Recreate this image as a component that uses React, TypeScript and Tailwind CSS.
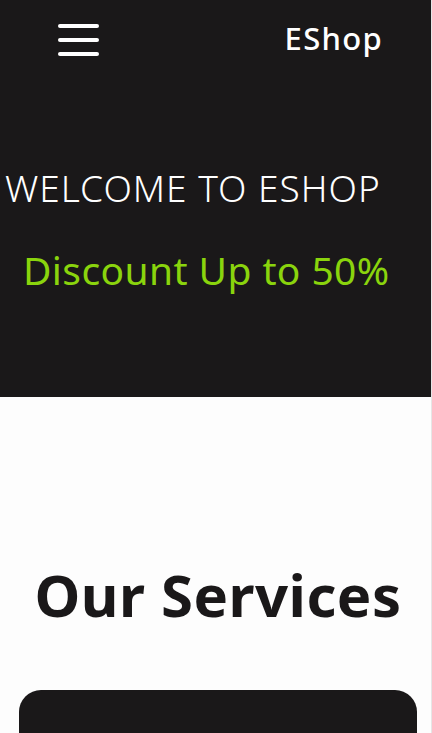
export default function App() {
  return (
    <div className="min-h-screen w-full bg-[#fdfdfd] font-['Noto_Sans',sans-serif] border-r border-[#e6e6e6]">
      <header className="bg-[#1a1819]">
        <nav className="h-[80px] flex items-center justify-between pl-[58px] pr-[48px]">
          <button className="flex flex-col gap-[10px] w-[41px]" aria-label="menu">
            <span className="block h-[4px] w-full rounded-full bg-white" />
            <span className="block h-[4px] w-full rounded-full bg-white" />
            <span className="block h-[4px] w-full rounded-full bg-white" />
          </button>
          <span className="text-white text-[31px] font-medium leading-none tracking-[1.3px] -mt-[3px]">EShop</span>
        </nav>
        <div className="h-[317px] pt-[85px]">
          <h1 className="pl-[5px] text-white text-[37px] font-light leading-[46px] tracking-[1px] whitespace-nowrap">WELCOME TO ESHOP</h1>
          <p className="mt-[36px] pl-[23px] text-[#8ad40d] text-[39px] leading-[46px] tracking-[0.4px] whitespace-nowrap">Discount Up to 50%</p>
        </div>
      </header>

      <section className="pt-[160px] pl-[19px] pr-[14px]">
        <h2 className="text-center text-[#1a1819] text-[58px] font-bold leading-[76px] tracking-[0.5px] whitespace-nowrap">Our Services</h2>
        <div className="mt-[57px] h-[200px] rounded-[22px] bg-[#1a1819]" />
      </section>
    </div>
  );
}
